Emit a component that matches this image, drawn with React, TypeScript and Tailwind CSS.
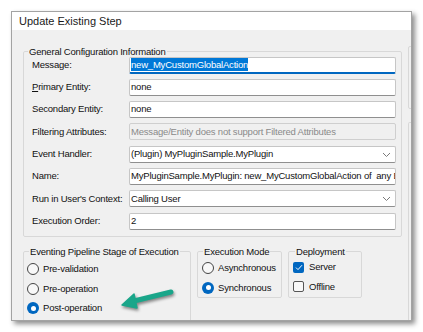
import React from "react";

const font = { fontFamily: '"Liberation Sans", Arial, sans-serif' };

function Label({ children }: { children: React.ReactNode }) {
  return (
    <div className="w-[97px] shrink-0 h-[17px] flex items-center text-[9.5px] tracking-[-0.2px] text-[#111]">
      {children}
    </div>
  );
}

function Box({
  children,
  disabled,
  focused,
  select,
}: {
  children?: React.ReactNode;
  disabled?: boolean;
  focused?: boolean;
  select?: boolean;
}) {
  return (
    <div
      className={
        "relative w-[267px] h-[17px] rounded-[2px] border flex items-center pl-[1px] overflow-hidden whitespace-nowrap text-[9.5px] tracking-[-0.2px] " +
        (disabled
          ? "bg-[#f0f0f0] border-[#cfcfcf] text-[#8a8a8a]"
          : focused
          ? "bg-white border-[#c6c6c6] border-b-2 border-b-[#0067c0] text-[#111]"
          : "bg-white border-[#c6c6c6] border-b-[#8f8f8f] text-[#111]")
      }
    >
      {children}
      {select && (
        <svg
          className="absolute right-[4px] top-[5px]"
          width="9"
          height="6"
          viewBox="0 0 9 6"
        >
          <path d="M1 1 L4.5 4.5 L8 1" fill="none" stroke="#7a7a7a" strokeWidth="1" />
        </svg>
      )}
    </div>
  );
}

function Radio({ checked }: { checked?: boolean }) {
  return checked ? (
    <div className="w-[12px] h-[12px] rounded-full bg-[#0067c0] flex items-center justify-center shrink-0">
      <div className="w-[5px] h-[5px] rounded-full bg-white" />
    </div>
  ) : (
    <div className="w-[12px] h-[12px] rounded-full border border-[#444] bg-[#f8f8f8] shrink-0" />
  );
}

function Check({ checked }: { checked?: boolean }) {
  return checked ? (
    <div className="w-[11px] h-[11px] rounded-[2px] bg-[#0067c0] flex items-center justify-center shrink-0">
      <svg width="8" height="7" viewBox="0 0 8 7">
        <path d="M1 3.6 L3 5.6 L7 1.2" fill="none" stroke="white" strokeWidth="1" />
      </svg>
    </div>
  ) : (
    <div className="w-[11px] h-[11px] rounded-[2px] border border-[#555] bg-[#f8f8f8] shrink-0" />
  );
}

function Opt({
  children,
  control,
  gap,
}: {
  children: React.ReactNode;
  control: React.ReactNode;
  gap: string;
}) {
  return (
    <div className={"h-[19.5px] flex items-center text-[9.5px] tracking-[-0.2px] text-[#111] " + gap}>
      {control}
      <span>{children}</span>
    </div>
  );
}

export default function App() {
  return (
    <div className="w-[423px] h-[332px] bg-white overflow-hidden relative" style={font}>
      <div className="ml-[11px] mt-[11px] w-[401px] h-[310px] border border-[#a3a3a3] flex flex-col overflow-hidden shadow-[3px_3px_5px_rgba(0,0,0,0.45)]">
        <div className="h-[24px] bg-white flex items-center pl-[7px] pt-[1px] text-[11px] text-[#1a1a1a]">
          Update Existing Step
        </div>
        <div className="flex-1 bg-[#f0f0f0] flex pl-[11px] pt-[16px]">
          <div className="w-[379px] shrink-0 flex flex-col">
            <fieldset className="border border-[#d8d8d8] rounded-[2px] pl-[8px] pr-[5px] pb-[6px]">
              <legend className="ml-[-4px] px-[1px] text-[9.5px] tracking-[-0.2px] leading-[11px] text-[#111]">
                General Configuration Information
              </legend>
              <div className="flex flex-col gap-[5.3px]">
                <div className="flex">
                  <Label>Message:</Label>
                  <Box focused>
                    <span className="bg-[#0078d7] text-white leading-[13px]">new_MyCustomGlobalAction</span>
                  </Box>
                </div>
                <div className="flex">
                  <Label>
                    <span>
                      <span className="underline">P</span>rimary Entity:
                    </span>
                  </Label>
                  <Box>none</Box>
                </div>
                <div className="flex">
                  <Label>Secondary Entity:</Label>
                  <Box>none</Box>
                </div>
                <div className="flex">
                  <Label>Filtering Attributes:</Label>
                  <Box disabled>Message/Entity does not support Filtered Attributes</Box>
                </div>
                <div className="flex">
                  <Label>Event Handler:</Label>
                  <Box select>(Plugin) MyPluginSample.MyPlugin</Box>
                </div>
                <div className="flex">
                  <Label>Name:</Label>
                  <Box>MyPluginSample.MyPlugin: new_MyCustomGlobalAction of&nbsp; any Entity</Box>
                </div>
                <div className="flex">
                  <Label>Run in User's Context:</Label>
                  <Box select>Calling User</Box>
                </div>
                <div className="flex">
                  <Label>Execution Order:</Label>
                  <Box>2</Box>
                </div>
              </div>
            </fieldset>
            <div className="flex items-start gap-[6px] mt-[9px]">
              <fieldset className="w-[168px] h-[100px] shrink-0 border border-[#d8d8d8] rounded-[2px] pl-[3px] pt-[3px]">
                <legend className="ml-[2px] px-[1px] text-[9.5px] tracking-[-0.2px] leading-[11px] text-[#111]">
                  Eventing Pipeline Stage of Execution
                </legend>
                <Opt gap="gap-[4px]" control={<Radio />}>Pre-validation</Opt>
                <Opt gap="gap-[4px]" control={<Radio />}>Pre-operation</Opt>
                <Opt gap="gap-[4px]" control={<Radio checked />}>Post-operation</Opt>
              </fieldset>
              <fieldset className="w-[85px] h-[52px] shrink-0 border border-[#d8d8d8] rounded-[2px] pl-[4px] pt-[2px]">
                <legend className="ml-[1px] px-[1px] text-[9.5px] tracking-[-0.2px] leading-[11px] text-[#111]">
                  Execution Mode
                </legend>
                <Opt gap="gap-[4px]" control={<Radio />}>Asynchronous</Opt>
                <Opt gap="gap-[4px]" control={<Radio checked />}>Synchronous</Opt>
              </fieldset>
              <fieldset className="w-[74px] h-[52px] shrink-0 border border-[#d8d8d8] rounded-[2px] pl-[4px] pt-[1px]">
                <legend className="ml-[2px] px-[1px] text-[9.5px] tracking-[-0.2px] leading-[11px] text-[#111]">
                  Deployment
                </legend>
                <Opt gap="gap-[5px]" control={<Check checked />}>Server</Opt>
                <Opt gap="gap-[5px]" control={<Check />}>Offline</Opt>
              </fieldset>
            </div>
          </div>
          <div className="ml-[6px] flex flex-col w-[40px] shrink-0">
            <div className="h-[63px] border border-[#d8d8d8] rounded-[2px]" />
            <div className="mt-[13px] flex-1 border border-[#d8d8d8] border-b-0 rounded-t-[2px]" />
          </div>
        </div>
      </div>
      <svg
        className="absolute left-[112px] top-[282px]"
        width="70"
        height="34"
        viewBox="0 0 70 34"
        style={{ filter: "drop-shadow(1px 2px 1.5px rgba(0,0,0,0.45))" }}
      >
        <path d="M59 10 L22 19" stroke="#1aa68a" strokeWidth="5" strokeLinecap="round" fill="none" />
        <path d="M10 23 L22 12 L25 26 Z" fill="#1aa68a" stroke="#1aa68a" strokeWidth="1.5" strokeLinejoin="round" />
      </svg>
    </div>
  );
}
